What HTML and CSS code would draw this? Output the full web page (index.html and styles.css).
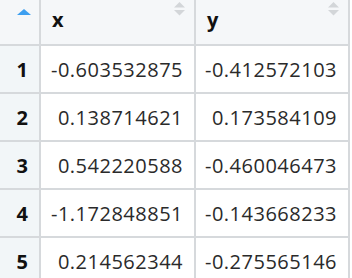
FILE: index.html
```html
<!DOCTYPE html>
<html>
<head>
<meta charset="utf-8">
<link rel="stylesheet" href="styles.css">
</head>
<body>
<table class="dt">
  <thead>
    <tr>
      <th class="rn-head">
        <div class="head-inner center">
          <svg class="sort-asc" width="14" height="6" viewBox="0 0 14 6"><polygon points="7,0 14,6 0,6" fill="#3d9ff0"/></svg>
        </div>
      </th>
      <th class="col-head">
        <div class="head-inner">
          <span class="head-text">x</span>
          <svg class="sort-both" width="11" height="14" viewBox="0 0 11 14"><polygon points="5.5,0 11,5.5 0,5.5" fill="#d3d6d9"/><polygon points="0,8 11,8 5.5,13.5" fill="#d3d6d9"/></svg>
        </div>
      </th>
      <th class="col-head">
        <div class="head-inner">
          <span class="head-text">y</span>
          <svg class="sort-both" width="11" height="14" viewBox="0 0 11 14"><polygon points="5.5,0 11,5.5 0,5.5" fill="#d3d6d9"/><polygon points="0,8 11,8 5.5,13.5" fill="#d3d6d9"/></svg>
        </div>
      </th>
    </tr>
  </thead>
  <tbody>
    <tr><td class="rn">1</td><td class="num">-0.603532875</td><td class="num">-0.412572103</td></tr>
    <tr><td class="rn">2</td><td class="num">0.138714621</td><td class="num">0.173584109</td></tr>
    <tr><td class="rn">3</td><td class="num">0.542220588</td><td class="num">-0.460046473</td></tr>
    <tr><td class="rn">4</td><td class="num">-1.172848851</td><td class="num">-0.143668233</td></tr>
    <tr><td class="rn">5</td><td class="num">0.214562344</td><td class="num">-0.275565146</td></tr>
  </tbody>
</table>
</body>
</html>
```

FILE: styles.css
```css
html, body {
  margin: 0;
  padding: 0;
  background: #ffffff;
}

.dt {
  border-collapse: separate;
  border-spacing: 0;
  font-family: "Open Sans", "Noto Sans", sans-serif;
  font-size: 20px;
  color: #2a2a2a;
  table-layout: fixed;
}

.dt th,
.dt td {
  padding: 0;
  border-right: 2px solid #d6d9dc;
  border-bottom: 2px solid #d6d9dc;
  box-sizing: content-box;
}

.dt th {
  height: 44px;
  background: #f5f7f9;
  vertical-align: top;
  text-align: left;
}

.rn-head {
  width: 39px;
}

.col-head {
  width: 153px;
}

.col-head:last-child {
  width: 152px;
}

.head-inner {
  display: flex;
  justify-content: space-between;
  align-items: flex-start;
  padding: 0 9px 0 11px;
}

.head-inner.center {
  justify-content: flex-start;
  padding: 9px 0 0 17px;
}

.head-text {
  font-weight: 700;
  color: #111111;
  line-height: 27px;
  padding-top: 6px;
}

.sort-both {
  margin-top: 2px;
}

.dt td {
  height: 46px;
  vertical-align: middle;
  line-height: 27px;
}

.rn {
  background: #f2f6f8;
  text-align: right;
  font-weight: 700;
  color: #111111;
  padding-right: 11px !important;
  width: 28px;
}

.num {
  text-align: right;
  padding-right: 11px !important;
  width: 142px;
  letter-spacing: 0.5px;
}

.num:last-child {
  width: 141px;
}
```
